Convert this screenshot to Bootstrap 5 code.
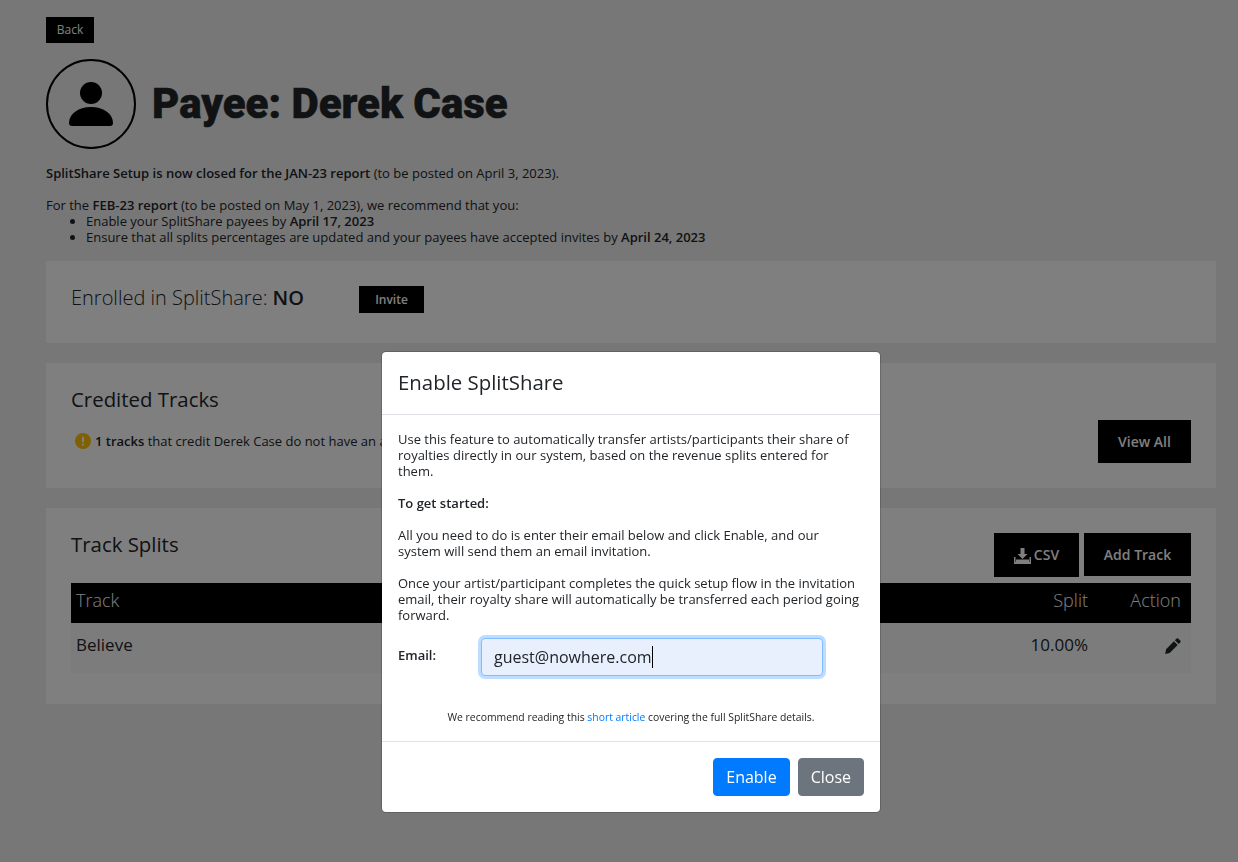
<!DOCTYPE html>
<html lang="en">
<head>
    <meta charset="UTF-8">
    <title>Payee: Derek Case</title>
    <link href="https://cdn.jsdelivr.net/npm/bootstrap@5.3.0/dist/css/bootstrap.min.css" rel="stylesheet">
    <style>
        body { background: #efefef; font-family: "Open Sans", "Liberation Sans", sans-serif; font-size: 13px; line-height: 16px; color: #212529; }
        .page-wrap { padding: 17px 22px 0 46px; }
        .btn-black { background: #000; color: #fff; border: 0; border-radius: 0; font-weight: 600; display: inline-flex; align-items: center; justify-content: center; }
        .btn-back { width: 48px; height: 26px; font-size: 12px; font-weight: 400; }
        .avatar-ring { width: 90px; height: 90px; border: 2px solid #000; border-radius: 50%; }
        .payee-title { font-family: Roboto, "Liberation Sans", sans-serif; font-weight: 900; font-size: 42px; line-height: 48px; margin: 0; -webkit-text-stroke: .5px #212529; }
        .head-row { margin-top: 16px; margin-bottom: 16px; }
        .notice-list { padding-left: 40px; margin: 0; }
        .notice-gap { margin: 0 0 16px; }
        .panel-box { background: #fff; padding: 25px; margin-top: 20px; }
        .panel-enrol { height: 82px; margin-top: 16px; }
        .enrol-text { font-size: 20px; line-height: 24px; font-weight: 300; }
        .btn-invite { width: 65px; height: 27px; font-size: 12px; margin-left: 55px; }
        .panel-credit { height: 125px; }
        .panel-title { font-size: 20.4px; line-height: 22px; font-weight: 500; margin: 0 0 2px; }
        .credit-line { margin-top: 23px; }
        .warn-dot { width: 16px; height: 16px; margin: 0 4px 0 4px; }
        .btn-big { height: 43px; font-size: 14px; }
        .btn-viewall { width: 93px; margin-top: 32px; }
        .btn-csv { width: 85px; height: 44px; }
        .btn-csv svg { margin-right: 3px; }
        .btn-addtrack { width: 107px; }
        .split-actions { gap: 5px; }
        .panel-splits { height: 196px; }
        .splits-table { font-size: 17px; margin: 6px 0 0; width: 100%; }
        .splits-table th { background: #000; color: #fff; font-weight: 300; font-size: 18px; height: 40px; padding: 0 5px 6px; border: 0; vertical-align: middle; }
        .splits-table td { background: #f9f9f9; height: 50px; padding: 0 5px 6px; border: 0; vertical-align: middle; }
        .splits-table .col-split { width: 90px; }
        .splits-table .col-action { width: 98px; padding-right: 10px; }
        .modal-dialog.enable-dialog { margin-top: 351px; max-width: 500px; width: 500px; margin-left: 381px; }
        .enable-dialog .modal-content { font-size: 13px; line-height: 16px; border-radius: 5px; }
        .enable-dialog .modal-header { height: 63px; padding: 0 16px 2px; }
        .enable-dialog .modal-title { font-size: 20.4px; line-height: 24px; font-weight: 400; }
        .enable-dialog .modal-body { padding: 16px; height: 326px; flex: none; }
        .enable-dialog .modal-footer { height: 71px; padding: 0 16px; gap: 8px; }
        .enable-dialog .modal-footer .btn { margin: 0; font-size: 16px; height: 38px; padding: 0 12px; border-radius: 4px; }
        .enable-dialog p { margin: 0 0 16px; }
        .email-row { margin-top: -1px; }
        .email-label { width: 83px; font-weight: 600; flex: none; padding-top: 9px; margin: 0; }
        .email-field { width: 342px; }
        .email-input.form-control { height: 38px; background: #e8f0fe; font-size: 16px; border-color: #80bdff; border-radius: 4px; box-shadow: 0 0 0 3px rgba(0,123,255,.25); padding: 6px 12px; color: #212529; font-family: inherit; }
        .text-caret { position: absolute; left: 171px; top: 8px; width: 1px; height: 22px; background: #000; }
        .rec-note { font-size: 10.4px; line-height: 14px; text-align: center; margin-top: 34px; }
        .rec-note a { color: #007bff; text-decoration: none; }
        .btn-enable { background: #007bff; border-color: #007bff; }
    </style>
</head>
<body>
    <div class="page-wrap">
        <button class="btn-black btn-back">Back</button>
        <div class="d-flex align-items-center gap-3 head-row">
            <div class="avatar-ring d-flex align-items-center justify-content-center">
                <svg width="46" height="46" viewBox="0 0 46 46"><circle cx="23" cy="12" r="11"/><path d="M1 42C1 33 10 26 23 26s22 7 22 16c0 2-1 3-3 3H4c-2 0-3-1-3-3z"/></svg>
            </div>
            <h1 class="payee-title">Payee: Derek Case</h1>
        </div>
        <p class="notice-gap"><b class="fw-semibold">SplitShare Setup is now closed for the JAN-23 report</b> (to be posted on April 3, 2023).</p>
        <div>For the <b class="fw-semibold">FEB-23 report</b> (to be posted on May 1, 2023), we recommend that you:</div>
        <ul class="notice-list">
            <li>Enable your SplitShare payees by <b class="fw-semibold">April 17, 2023</b></li>
            <li>Ensure that all splits percentages are updated and your payees have accepted invites by <b class="fw-semibold">April 24, 2023</b></li>
        </ul>

        <div class="panel-box panel-enrol d-flex align-items-start">
            <span class="enrol-text">Enrolled in SplitShare: <b class="fw-semibold">NO</b></span>
            <button class="btn-black btn-invite">Invite</button>
        </div>

        <div class="panel-box panel-credit d-flex justify-content-between">
            <div>
                <h2 class="panel-title">Credited Tracks</h2>
                <div class="d-flex align-items-center credit-line">
                    <svg class="warn-dot" viewBox="0 0 16 16"><circle cx="8" cy="8" r="8" fill="#ffc107"/><rect x="7" y="3.500" width="2" height="6" rx="1" fill="#fff"/><circle cx="8" cy="11.700" r="1.100" fill="#fff"/></svg>
                    <span><b class="fw-semibold">1 tracks</b> that credit Derek Case do not have an active SplitShare payee.</span>
                </div>
            </div>
            <button class="btn-black btn-big btn-viewall align-self-start">View All</button>
        </div>

        <div class="panel-box panel-splits">
            <div class="d-flex justify-content-between align-items-start">
                <h2 class="panel-title">Track Splits</h2>
                <div class="d-flex split-actions">
                    <button class="btn-black btn-big btn-csv">
                        <svg width="17" height="17" viewBox="0 0 17 17" fill="#fff"><path d="M6.500 1h4v6h3l-5 5-5-5h3z"/><path d="M0 10h1.500v5h14v-5H17v7H0z"/><rect x="2" y="12.500" width="13" height="2.500"/></svg>CSV
                    </button>
                    <button class="btn-black btn-big btn-addtrack">Add Track</button>
                </div>
            </div>
            <table class="splits-table">
                <thead><tr><th>Track</th><th class="text-end col-split">Split</th><th class="text-end col-action">Action</th></tr></thead>
                <tbody><tr>
                    <td>Believe</td>
                    <td class="text-end col-split">10.00%</td>
                    <td class="text-end col-action">
                        <svg width="16" height="16" viewBox="0 0 16 16" fill="#212529"><path d="M11.400 .8a1.500 1.500 0 0 1 2.100 0l1.700 1.700a1.500 1.500 0 0 1 0 2.100l-1.500 1.500-3.800-3.800zM8.900 3.300l3.800 3.800-8 8-4.500 .9 .9-4.700z"/></svg>
                    </td>
                </tr></tbody>
            </table>
        </div>
    </div>

    <div class="modal-backdrop fade show"></div>
    <div class="modal fade show d-block" tabindex="-1">
        <div class="modal-dialog enable-dialog">
            <div class="modal-content">
                <div class="modal-header">
                    <h5 class="modal-title">Enable SplitShare</h5>
                </div>
                <div class="modal-body">
                    <p>Use this feature to automatically transfer artists/participants their share of royalties directly in our system, based on the revenue splits entered for them.</p>
                    <p class="fw-semibold">To get started:</p>
                    <p>All you need to do is enter their email below and click Enable, and our system will send them an email invitation.</p>
                    <p>Once your artist/participant completes the quick setup flow in the invitation email, their royalty share will automatically be transferred each period going forward.</p>
                    <div class="d-flex email-row">
                        <label class="email-label" for="emailInput">Email:</label>
                        <div class="email-field position-relative">
                            <input id="emailInput" class="form-control email-input" type="text" value="guest@nowhere.com">
                            <span class="text-caret"></span>
                        </div>
                    </div>
                    <div class="rec-note">We recommend reading this <a href="#">short article</a> covering the full SplitShare details.</div>
                </div>
                <div class="modal-footer">
                    <button class="btn btn-primary btn-enable">Enable</button>
                    <button class="btn btn-secondary">Close</button>
                </div>
            </div>
        </div>
    </div>
    <script src="https://cdn.jsdelivr.net/npm/bootstrap@5.3.0/dist/js/bootstrap.bundle.min.js"></script>
</body>
</html>
